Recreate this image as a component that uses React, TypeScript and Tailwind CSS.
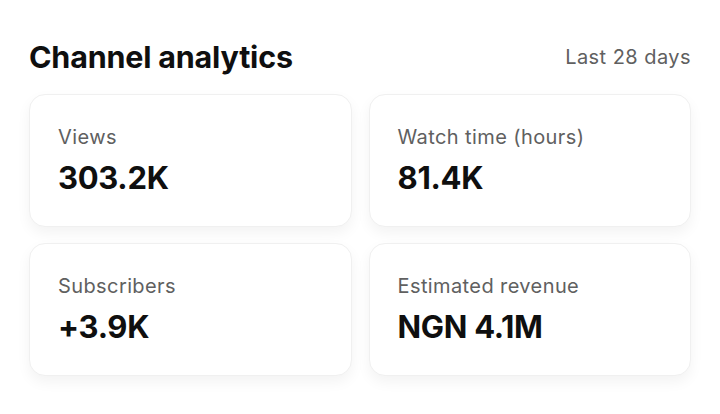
const stats = [
  { label: 'Views', value: '303.2K' },
  { label: 'Watch time (hours)', value: '81.4K' },
  { label: 'Subscribers', value: '+3.9K' },
  { label: 'Estimated revenue', value: 'NGN 4.1M' },
];

export default function App() {
  return (
    <div className="h-[414px] w-[720px] bg-white px-[29px] pt-[38px] font-['Inter',sans-serif] text-[#0f0f0f]">
      <div className="flex items-center justify-between">
        <h1 className="text-[30.5px] font-bold leading-[38px] tracking-[-0.2px]">Channel analytics</h1>
        <span className="text-[20px] tracking-[0.45px] text-[#606060]">Last 28 days</span>
      </div>
      <div className="mt-[18px] grid grid-cols-2 gap-x-[17px] gap-y-[16px]">
        {stats.map((s) => (
          <div
            key={s.label}
            className="h-[133px] rounded-[16px] border border-[#f0f0f0] bg-white px-[28px] pt-[29px] shadow-[0_6px_14px_rgba(0,0,0,0.05)]"
          >
            <p className="text-[20px] leading-[26px] tracking-[0.4px] text-[#606060]">{s.label}</p>
            <p className="mt-[9px] text-[31px] font-bold leading-[38px] tracking-[-0.3px]">{s.value}</p>
          </div>
        ))}
      </div>
    </div>
  );
}
